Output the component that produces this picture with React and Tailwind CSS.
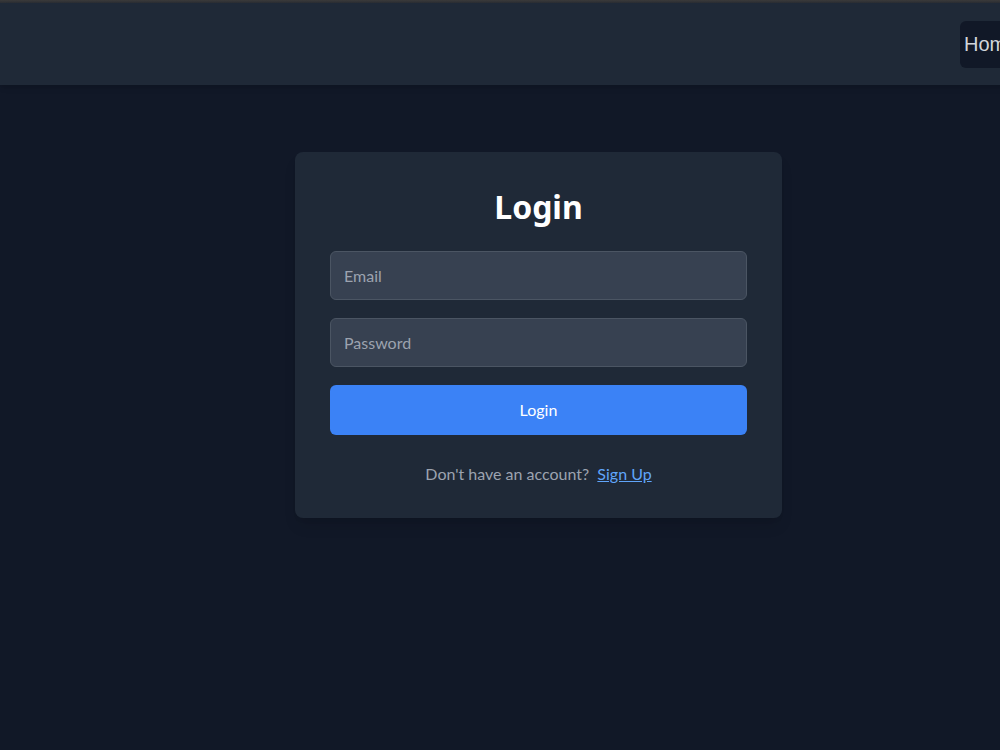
export default function App() {
  return (
    <div className="h-[750px] w-full overflow-hidden bg-[#111827]">
      <div className="w-[1077px] min-h-[750px] bg-[#111827] font-['Lato',sans-serif] flex flex-col">
        <div className="h-[3px] bg-gradient-to-b from-[#3a3a3a] to-[#2a2d33]" />
        <header className="h-[82px] bg-[#1f2937] shadow-md flex items-center justify-end pr-[40px]">
          <nav className="flex shrink-0">
            <button className="h-[47px] w-[77px] px-1 rounded-md bg-[#111827] text-[#d1d5db] text-[20px] font-['Liberation_Sans',sans-serif] text-left">
              Home
            </button>
          </nav>
        </header>
        <main className="flex justify-center pt-[67px]">
          <div className="w-[487px] bg-[#1f2937] rounded-lg shadow-lg px-[35px] pt-[35px] pb-[32px]">
            <h1 className="text-[32px] leading-[40px] font-bold text-white text-center mb-6 font-['Noto_Sans',sans-serif]">Login</h1>
            <div className="flex flex-col gap-[18px]">
              <input
                type="email"
                placeholder="Email"
                className="h-[49px] w-full rounded-md bg-[#374151] border border-[#4b5563] px-[13px] text-[16px] text-white placeholder:text-[#9ca3af] outline-none"
              />
              <input
                type="password"
                placeholder="Password"
                className="h-[49px] w-full rounded-md bg-[#374151] border border-[#4b5563] px-[13px] text-[16px] text-white placeholder:text-[#9ca3af] outline-none"
              />
              <button className="h-[50px] w-full rounded-md bg-[#3b82f6] text-white text-[16px]">Login</button>
            </div>
            <p className="mt-[27px] text-center text-[16px] leading-6 text-[#9ca3af]">
              Don't have an account?{" "}
              <a href="#" className="ml-1 text-[#60a5fa] underline">Sign Up</a>
            </p>
          </div>
        </main>
      </div>
    </div>
  );
}
